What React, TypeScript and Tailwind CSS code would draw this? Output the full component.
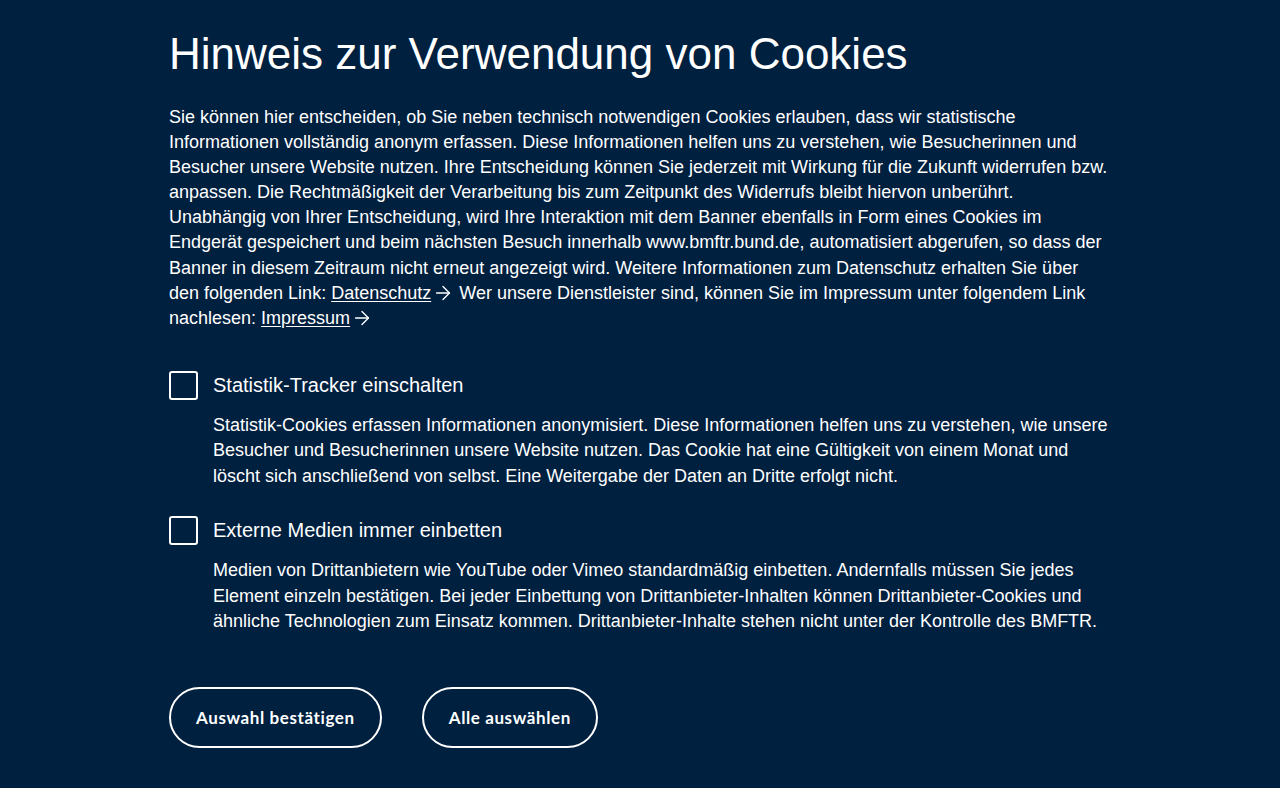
import { ArrowRight } from "lucide-react";

function Option({ label, text }: { label: string; text: string }) {
  return (
    <div>
      <label className="flex items-center gap-[15px] cursor-pointer">
        <span className="w-[29px] h-[29px] border-2 border-white rounded-[3px] shrink-0" />
        <span className="text-[20px] leading-[29px]">{label}</span>
      </label>
      <p className="mt-[13px] pl-[44px] text-[18px] leading-[25.5px]">{text}</p>
    </div>
  );
}

export default function App() {
  return (
    <div
      className="bg-[#00203f] text-white"
      style={{ fontFamily: '"Liberation Sans", Arial, sans-serif' }}
    >
      <div className="w-[942px] mx-auto pt-[27px] pb-[40px]">
        <h1 className="text-[44px] leading-[54px]">Hinweis zur Verwendung von Cookies</h1>

        <p className="mt-[24px] text-[18px] leading-[25.1px]">
          Sie können hier entscheiden, ob Sie neben technisch notwendigen Cookies erlauben, dass wir statistische
          Informationen vollständig anonym erfassen. Diese Informationen helfen uns zu verstehen, wie Besucherinnen und
          Besucher unsere Website nutzen. Ihre Entscheidung können Sie jederzeit mit Wirkung für die Zukunft widerrufen bzw.
          anpassen. Die Rechtmäßigkeit der Verarbeitung bis zum Zeitpunkt des Widerrufs bleibt hiervon unberührt.
          Unabhängig von Ihrer Entscheidung, wird Ihre Interaktion mit dem Banner ebenfalls in Form eines Cookies im
          Endgerät gespeichert und beim nächsten Besuch innerhalb www.bmftr.bund.de, automatisiert abgerufen, so dass der
          Banner in diesem Zeitraum nicht erneut angezeigt wird. Weitere Informationen zum Datenschutz erhalten Sie über
          den folgenden Link:{" "}
          <a href="#" className="underline underline-offset-2">Datenschutz</a>
          <ArrowRight className="inline-block w-[22px] h-[22px] -my-[4px] -mt-[6px] ml-[1px] mr-[5px]" strokeWidth={1.5} />
          Wer unsere Dienstleister sind, können Sie im Impressum unter folgendem Link nachlesen:{" "}
          <a href="#" className="underline underline-offset-2">Impressum</a>
          <ArrowRight className="inline-block w-[22px] h-[22px] -my-[4px] -mt-[6px] ml-[1px]" strokeWidth={1.5} />
        </p>

        <div className="mt-[40px] flex flex-col gap-[27px]">
          <Option
            label="Statistik-Tracker einschalten"
            text="Statistik-Cookies erfassen Informationen anonymisiert. Diese Informationen helfen uns zu verstehen, wie unsere Besucher und Besucherinnen unsere Website nutzen. Das Cookie hat eine Gültigkeit von einem Monat und löscht sich anschließend von selbst. Eine Weitergabe der Daten an Dritte erfolgt nicht."
          />
          <Option
            label="Externe Medien immer einbetten"
            text="Medien von Drittanbietern wie YouTube oder Vimeo standardmäßig einbetten. Andernfalls müssen Sie jedes Element einzeln bestätigen. Bei jeder Einbettung von Drittanbieter-Inhalten können Drittanbieter-Cookies und ähnliche Technologien zum Einsatz kommen. Drittanbieter-Inhalte stehen nicht unter der Kontrolle des BMFTR."
          />
        </div>

        <div className="mt-[52px] flex gap-[40px]">
          <button
            className="h-[61px] px-[25px] rounded-full border-2 border-white text-[17px] font-bold tracking-[0.6px]"
            style={{ fontFamily: 'Lato, sans-serif' }}
          >
            Auswahl bestätigen
          </button>
          <button
            className="h-[61px] px-[25px] rounded-full border-2 border-white text-[17px] font-bold tracking-[0.6px]"
            style={{ fontFamily: 'Lato, sans-serif' }}
          >
            Alle auswählen
          </button>
        </div>
      </div>
    </div>
  );
}
